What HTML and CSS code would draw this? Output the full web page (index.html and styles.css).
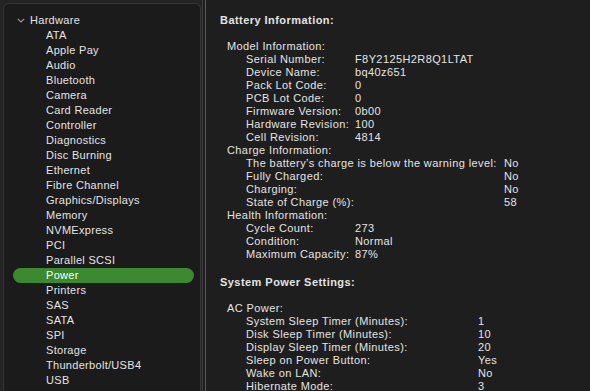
FILE: index.html
```html
<!DOCTYPE html>
<html lang="en">
<head>
    <meta charset="UTF-8">
    <title>System Information - Power</title>
    <link rel="stylesheet" href="styles.css">
</head>
<body>
    <div class="window">
        <aside class="sidebar">
            <div class="tree">
                <div class="group-title">
                    <svg class="chevron" width="8" height="5" viewBox="0 0 8 5"><path d="M0.8 0.8 L4 4 L7.2 0.8" fill="none" stroke="#9a9a9a" stroke-width="1.2"/></svg>
                    Hardware
                </div>
                <ul class="items">
                    <li>ATA</li>
                    <li>Apple Pay</li>
                    <li>Audio</li>
                    <li>Bluetooth</li>
                    <li>Camera</li>
                    <li>Card Reader</li>
                    <li>Controller</li>
                    <li>Diagnostics</li>
                    <li>Disc Burning</li>
                    <li>Ethernet</li>
                    <li>Fibre Channel</li>
                    <li>Graphics/Displays</li>
                    <li>Memory</li>
                    <li>NVMExpress</li>
                    <li>PCI</li>
                    <li>Parallel SCSI</li>
                    <li class="selected">Power</li>
                    <li>Printers</li>
                    <li>SAS</li>
                    <li>SATA</li>
                    <li>SPI</li>
                    <li>Storage</li>
                    <li>Thunderbolt/USB4</li>
                    <li>USB</li>
                </ul>
            </div>
        </aside>
        <div class="divider"></div>
        <main class="content">
            <h2>Battery Information:</h2>
            <div class="sub">Model Information:</div>
            <div class="rows w-model">
                <span>Serial Number:</span><span>F8Y2125H2R8Q1LTAT</span>
                <span>Device Name:</span><span>bq40z651</span>
                <span>Pack Lot Code:</span><span>0</span>
                <span>PCB Lot Code:</span><span>0</span>
                <span>Firmware Version:</span><span>0b00</span>
                <span>Hardware Revision:</span><span>100</span>
                <span>Cell Revision:</span><span>4814</span>
            </div>
            <div class="sub">Charge Information:</div>
            <div class="rows w-charge">
                <span>The battery’s charge is below the warning level:</span><span>No</span>
                <span>Fully Charged:</span><span>No</span>
                <span>Charging:</span><span>No</span>
                <span>State of Charge (%):</span><span>58</span>
            </div>
            <div class="sub">Health Information:</div>
            <div class="rows w-model">
                <span>Cycle Count:</span><span>273</span>
                <span>Condition:</span><span>Normal</span>
                <span>Maximum Capacity:</span><span>87%</span>
            </div>

            <h2 class="next">System Power Settings:</h2>
            <div class="sub">AC Power:</div>
            <div class="rows w-ac">
                <span>System Sleep Timer (Minutes):</span><span>1</span>
                <span>Disk Sleep Timer (Minutes):</span><span>10</span>
                <span>Display Sleep Timer (Minutes):</span><span>20</span>
                <span>Sleep on Power Button:</span><span>Yes</span>
                <span>Wake on LAN:</span><span>No</span>
                <span>Hibernate Mode:</span><span>3</span>
            </div>
        </main>
    </div>
</body>
</html>
```

FILE: styles.css
```css
html, body {
    margin: 0;
    padding: 0;
    height: 100%;
}

body {
    background: #1e1e1e;
    color: #e4e4e4;
    font-family: 'Liberation Sans', Arial, sans-serif;
    font-size: 11px;
    overflow: hidden;
}

.window {
    display: flex;
    height: 391px;
    background: #242424;
}

.sidebar {
    width: 201px;
    padding: 3px 0 0 3px;
    box-sizing: border-box;
    flex-shrink: 0;
}

.tree {
    height: 100%;
    box-sizing: border-box;
    background: #1b1b1b;
    border: 1px solid #353535;
    border-bottom: none;
    border-radius: 6px 6px 0 0;
    padding-top: 9px;
    letter-spacing: 0.3px;
}

.group-title {
    display: flex;
    align-items: center;
    height: 15px;
    line-height: 15px;
    padding-left: 13px;
}

.chevron {
    margin-right: 5px;
}

.items {
    list-style: none;
    margin: 0;
    padding: 0;
}

.items li {
    height: 15px;
    line-height: 15px;
    padding-left: 33px;
    margin: 0 6px 0 9px;
    white-space: nowrap;
}

.items li.selected {
    background: #3b8a2f;
    border-radius: 8px;
    color: #fff;
}

.divider {
    width: 4px;
    flex-shrink: 0;
    background: #1e1e1e;
    border-left: 1px solid #3c3c3c;
    border-right: 1px solid #5a5a5a;
    box-sizing: border-box;
    margin-left: 1px;
}

.content {
    flex: 1;
    background: #1e1e1e;
    padding: 14px 0 0 14px;
    line-height: 13px;
    white-space: nowrap;
    letter-spacing: 0.4px;
}

h2 {
    font-size: 11px;
    font-weight: bold;
    line-height: 13px;
    margin: 0 0 13px 0;
    letter-spacing: 0.45px;
}

h2.next {
    margin-top: 15px;
}

.sub {
    padding-left: 7px;
}

.rows {
    display: grid;
    padding-left: 26px;
}

.w-model {
    grid-template-columns: 109px auto;
}

.w-charge {
    grid-template-columns: 258px auto;
}

.w-ac {
    grid-template-columns: 232px auto;
}
```
